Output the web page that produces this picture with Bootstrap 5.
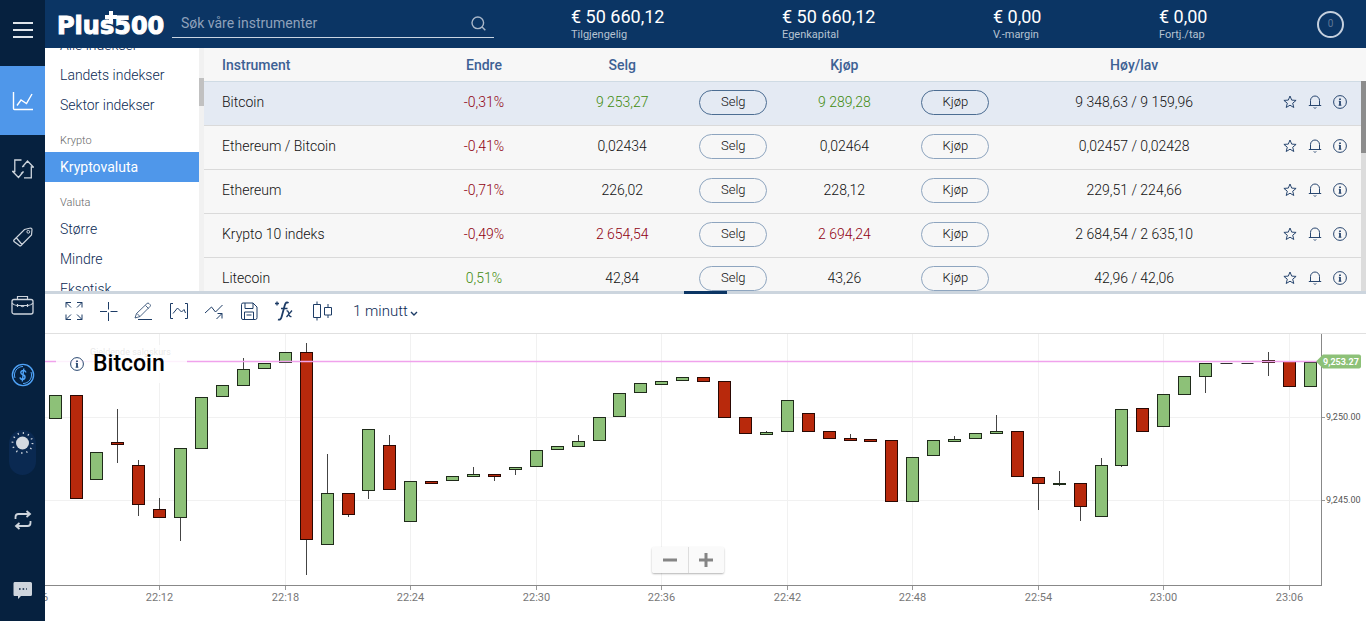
<!DOCTYPE html>
<html lang="nb">
<head>
<meta charset="utf-8">
<meta name="viewport" content="width=device-width, initial-scale=1">
<title>Plus500</title>
<link rel="stylesheet" href="https://cdn.jsdelivr.net/npm/bootstrap@5.3.0/dist/css/bootstrap.min.css">
<style>
  :root { --navy: #0b3564; --rail: #06213f; --blue: #4f97ea; --ink: #0b2a54; }
  body { font-family: Roboto, "Liberation Sans", sans-serif; font-size: 14px; line-height: 20px; color: #111; background: #fff; }
  svg { display: block; }
  .ico { fill: none; stroke: currentColor; stroke-width: 1; }
  a { color: inherit; text-decoration: none; }
  button { font-family: inherit; }

  .rail { width: 45px; background: var(--rail); color: #ced5dd; }
  .rail-item { min-height: 68px; }
  .rail-menu { height: 60px; margin-bottom: 6px; background: none; border: 0; color: #dfe5eb; }
  .rail-item.active { background: var(--blue); color: #fff; min-height: 69px; }
  .rail-item.last-item { min-height: 0; }
  .theme-switch { width: 27px; height: 45px; margin: 23px 0 11px 9px; border-radius: 14px; background: #0a2951; border: 0; color: #d3d9e0; }

  .topbar { height: 48px; background: var(--navy); color: #fff; }
  .brand { width: 127px; padding-left: 12px; color: #fff; font: 700 24px/28px "DejaVu Sans", sans-serif; -webkit-text-stroke: 1px #fff; }
  .brand-cross { position: absolute; left: 60px; top: -2px; }
  .search-box { width: 322px; height: 31px; margin-top: 7px; padding-top: 2px; border-bottom: 1px solid #c9d5e2; color: #a9b7c9; }
  .search-box input { background: none; border: 0; outline: 0; font-size: 14px; color: #fff; padding: 0 0 0 9px; }
  .search-box input::placeholder { color: #8fa1bb; opacity: 1; }
  .balances { margin-left: 77px; }
  .balances > div { flex: 211 1 0; }
  .balances > .w-margin { flex-grow: 166; }
  .balances > .w-result { flex-grow: 158; }
  .amount { font-size: 18px; line-height: 20px; margin-top: 7px; white-space: nowrap; }
  .caption-text { font-size: 11px; line-height: 15px; color: #b6c3d2; }
  .counter { width: 27px; height: 27px; border: 2px solid #c5d0de; border-radius: 50%; background: none; color: #5f7898; font-size: 10px; line-height: 20px; margin-right: 22px; }

  .upper { height: 243px; }
  .categories { width: 154px; color: var(--ink); font-weight: 300; }
  .categories a { display: block; height: 30px; line-height: 30px; padding-left: 15px; }
  .categories a:first-child { margin-top: -18px; }
  .categories a.active { background: var(--blue); color: #fff; font-weight: 400; }
  .categories h6 { font-size: 11px; line-height: 22px; height: 32px; padding: 10px 0 0 15px; margin: 0; font-weight: 300; color: #666; }
  .track { width: 5px; background: #f1f1f1; flex: none; }
  .track-list { padding-top: 30px; }
  .track-list div { height: 28px; background: #c1c1c1; }
  .track-table { margin-top: 33px; background: #dcdcdc; }
  .track-table div { height: 72px; background: #8c8c8c; }

  .quotes { table-layout: fixed; width: 100%; text-align: center; font-weight: 300; }
  .quotes th { height: 33px; padding: 2px 0 0; font-weight: 500; color: #3d6194; border-bottom: 1px solid #cfdbe4; vertical-align: middle; }
  .quotes td { height: 44px; padding: 0 0 2px; border-bottom: 1px solid #dadada; vertical-align: middle; }
  .quotes th:first-child, .quotes td:first-child { text-align: left; padding-left: 18px; }
  .quotes .selected { background: #e4eaf3; }
  .c-name { width: 18.3%; } .c-chg { width: 11.8%; } .c-price { width: 12.1%; }
  .c-btn { width: 7.1%; } .c-range { width: 23.8%; }
  .up { color: #3f8a0d; } .down { color: #900010; }
  .table-pane { background: #f7f7f7; }
  .deal { width: 68px; height: 25px; border: 1px solid #8ea5bf; border-radius: 13px; background: none; font-size: 13px; line-height: 20px; padding: 0; color: #111; font-weight: 300; }
  .selected .deal { border-color: #4c6d92; }
  .row-tools { color: #28466f; gap: 11px; padding-left: 11px; }
  .row-tools button { background: none; border: 0; padding: 0; color: inherit; }

  .splitter { height: 3px; background: #ccd5de; }
  .splitter div { width: 43px; background: var(--navy); }
  .tools { height: 40px; border-bottom: 1px solid #e0e0e0; padding: 0 19px 5px; color: #1d3c66; gap: 15px; }
  .tools button { width: 20px; height: 20px; padding: 0; border: 0; background: none; color: inherit; }
  .tools .wide-tool { width: 26px; padding-left: 3px; }
  .interval { margin-left: 3px; }
  .interval select { appearance: none; border: 0; background: none; width: 68px; padding: 0; font-size: 15px; font-weight: 300; color: var(--ink); }
  .interval svg { position: absolute; right: 3px; top: 10px; pointer-events: none; }

  .chart-title { position: absolute; left: 11px; top: 11px; width: 131px; height: 38px; padding: 0 0 0 14px; background: rgba(255,255,255,.85); gap: 9px; color: #28466f; }
  .chart-title h1 { font-size: 23px; line-height: 36px; font-weight: 500; color: #000; margin: 0; }
  .zoomer { position: absolute; left: 46%; bottom: 48px; background: rgba(250,250,250,.9); box-shadow: 0 1px 2px rgba(0,0,0,.3); border-radius: 2px; color: #858585; margin-left: -1px; }
  .zoomer button { width: 36px; height: 26px; border: 0; background: none; color: inherit; padding: 0 11px; }
  .zoomer button + button { border-left: 1px solid #ddd; padding: 0 10px; }
</style>
</head>
<body class="vh-100 overflow-hidden d-flex">

<svg width="0" height="0" class="position-absolute" aria-hidden="true">
  <symbol id="i-star" viewBox="0 0 14 14"><path d="M7 1l1.700 4.100 4.400.3-3.400 2.800 1.100 4.300L7 10.200l-3.800 2.300 1.100-4.300L.9 5.400l4.400-.3z"/></symbol>
  <symbol id="i-bell" viewBox="0 0 14 14"><path d="M.8 10.500h12.400M2.500 10.500V5.500a4.500 4.500 0 0 1 9 0v5M5.800 12.500c.6 1 1.800 1 2.400 0"/></symbol>
  <symbol id="i-info" viewBox="0 0 14 14"><circle cx="7" cy="7" r="6.400"/><path d="M7 6v4.200M7 3.500v1.500" stroke-width="1.800"/><path d="M5.800 6.300H7M5.600 10.200h2.800"/></symbol>
</svg>

<nav class="rail d-flex flex-column flex-shrink-0" aria-label="Hovedmeny">
  <button type="button" class="rail-menu flex-shrink-0 d-flex align-items-center justify-content-center" aria-label="Meny">
    <svg class="ico" width="20" height="18" viewBox="0 0 20 18"><path stroke-width="2" d="M0 2h20M0 9h20M0 16h20"/></svg>
  </button>
  <a href="#" class="rail-item active d-flex align-items-center justify-content-center" aria-label="Handle">
    <svg class="ico" width="22" height="20" viewBox="0 0 22 20"><path stroke-width="1.400" d="M1.500 1v16.500q0 1 1 1H21M5 14.500l4-5.500 5.500 3.500L20 3"/></svg>
  </a>
  <a href="#" class="rail-item d-flex align-items-center justify-content-center" aria-label="Åpne posisjoner">
    <svg class="ico" width="22" height="20" viewBox="0 0 22 20"><path stroke-width="1.300" d="M9.500 1H2.800v11.500H.7l5.800 6 5-6L9 14.500M12 18.800h7.300V8h2l-5.800-6-5.200 6 2.200-1.500"/></svg>
  </a>
  <a href="#" class="rail-item d-flex align-items-center justify-content-center" aria-label="Ordre">
    <svg class="ico" width="20" height="20" viewBox="0 0 20 20"><path stroke-width="1.200" d="M1 13L11.500 2.500l6-1.500q1.500 0 1.500 1.500l-.5 5.500L8 18.500q-.8.800-1.600 0L1 14.500q-.6-.8 0-1.500zM3.500 11l5.500 6.500"/><circle cx="15.300" cy="4.800" r="1.400"/></svg>
  </a>
  <a href="#" class="rail-item d-flex align-items-center justify-content-center" aria-label="Stengte posisjoner">
    <svg class="ico" width="23" height="20" viewBox="0 0 23 20"><rect x="1" y="4.500" width="21" height="14.500" rx="2" stroke-width="1.300"/><path stroke-width="1.200" d="M6.500 4V1.500h10V4M1 8q2 2.500 5 2.500h11q3 0 5-2.500M6.500 9v3M16.500 9v3M9.500 10.500q2 2.500 4 0"/></svg>
  </a>
  <a href="#" class="rail-item d-flex align-items-center justify-content-center pt-1" aria-label="Penger">
    <svg width="24" height="24" viewBox="0 0 24 24" fill="none" stroke="#4fa3f7"><circle cx="12" cy="12" r="10.600" stroke-width="1.400"/><path d="M4 15A8.500 8.500 0 0 1 12 3.500M20 9a8.500 8.500 0 0 1-8 11.500"/><path stroke-width="1.400" d="M14.800 9.500q-.3-2-2.500-2T9.800 9.500q0 1.700 2.200 2.300t2 2.500q-.3 2-2.500 2t-2.500-2M12.800 5.500l-1.500 13"/></svg>
  </a>
  <button type="button" role="switch" aria-checked="false" aria-label="Mørkt tema" class="theme-switch flex-shrink-0 d-flex align-items-start justify-content-center p-0">
    <svg width="25" height="25" viewBox="0 0 25 25"><circle cx="12.500" cy="13" r="6.500" fill="currentColor"/><circle cx="12.500" cy="13" r="10" fill="none" stroke="currentColor" stroke-width="1.800" stroke-dasharray="1.200 4.036"/></svg>
  </button>
  <a href="#" class="rail-item d-flex align-items-center justify-content-center" aria-label="Bytt konto">
    <svg class="ico" width="18" height="20" viewBox="0 0 18 20"><path stroke-width="1.800" d="M1.500 9V7q0-3 3-3H15M12.500 1l3.500 3-3.500 3M16.500 11v2q0 3-3 3H3M5.500 13L2 16l3.500 3"/></svg>
  </a>
  <a href="#" class="rail-item last-item flex-grow-1 d-flex justify-content-center pt-4" aria-label="Chat">
    <svg class="mt-1" width="20" height="17" viewBox="0 0 20 17"><path fill="currentColor" d="M1.500 0h16q1.500 0 1.500 1.500v11q0 1.500-1.500 1.500H8l-3 3v-3H1.500Q.5 14 .5 12.500v-11Q.5 0 1.500 0z"/><path stroke="#06213f" stroke-width="1.500" stroke-dasharray="1.600 2" d="M6 7h8"/></svg>
  </a>
</nav>

<div class="d-flex flex-column flex-grow-1 overflow-hidden">
  <header class="topbar d-flex flex-shrink-0">
    <a href="#" class="brand position-relative flex-shrink-0 pt-2 mt-1">Plus500
      <svg class="brand-cross" width="12" height="22" viewBox="0 0 12 22"><path fill="#fff" d="M4 9h4v4h4v4H8v4H4v-4H0v-4h4z"/></svg>
    </a>
    <form class="search-box d-flex align-items-center flex-shrink-0" role="search">
      <input type="search" class="flex-grow-1" placeholder="Søk våre instrumenter" aria-label="Søk våre instrumenter">
      <svg class="ico me-2" width="15" height="15" viewBox="0 0 15 15"><circle cx="6.800" cy="6.800" r="5.800" stroke-width="1.400"/><path stroke-width="1.400" d="M10.800 10.800l3.500 3.500"/></svg>
    </form>
    <div class="balances d-flex flex-grow-1">
      <div><div class="amount">€ 50 660,12</div><div class="caption-text">Tilgjengelig</div></div>
      <div><div class="amount">€ 50 660,12</div><div class="caption-text">Egenkapital</div></div>
      <div class="w-margin"><div class="amount">€ 0,00</div><div class="caption-text">V.-margin</div></div>
      <div class="w-result"><div class="amount">€ 0,00</div><div class="caption-text">Fortj./tap</div></div>
    </div>
    <button type="button" class="counter p-0 flex-shrink-0 align-self-center" aria-label="Varsler">0</button>
  </header>

  <div class="upper d-flex flex-shrink-0 overflow-hidden">
    <nav class="categories flex-shrink-0 overflow-hidden" aria-label="Kategorier">
      <a href="#">Alle indekser</a>
      <a href="#">Landets indekser</a>
      <a href="#">Sektor indekser</a>
      <h6>Krypto</h6>
      <a href="#" class="active">Kryptovaluta</a>
      <h6>Valuta</h6>
      <a href="#">Større</a>
      <a href="#">Mindre</a>
      <a href="#">Eksotisk</a>
    </nav>
    <div class="track track-list"><div></div></div>
    <div class="table-pane d-flex flex-grow-1 overflow-hidden">
      <div class="flex-grow-1 overflow-hidden">
        <table class="quotes">
          <thead>
            <tr><th class="c-name">Instrument</th><th class="c-chg">Endre</th><th class="c-price">Selg</th><th class="c-btn"></th><th class="c-price">Kjøp</th><th class="c-btn"></th><th class="c-range">Høy/lav</th><th></th></tr>
          </thead>
          <tbody id="quotes"></tbody>
        </table>
      </div>
      <div class="track track-table"><div></div></div>
    </div>
  </div>

  <div class="splitter d-flex justify-content-center flex-shrink-0"><div></div></div>

  <div class="tools d-flex align-items-center flex-shrink-0" role="toolbar" aria-label="Diagramverktøy">
    <button type="button" aria-label="Fullskjerm"><svg class="ico" width="20" height="20" viewBox="0 0 20 20"><path d="M2 6.500v-5h5M2 1.500l5 5M13 1.500h5v5M18 1.500l-5 5M2 13.500v5h5M2 18.500l5-5M18 13.500v5h-5M18 18.500l-5-5"/></svg></button>
    <button type="button" aria-label="Trådkors"><svg class="ico" width="20" height="20" viewBox="0 0 20 20"><path d="M9.500 1v7.500M9.500 11.500V20M1 10.500h7M11.500 10.500h7"/></svg></button>
    <button type="button" aria-label="Tegn"><svg class="ico" width="20" height="20" viewBox="0 0 20 20"><path stroke-width=".8" d="M1 17l1.500-4.500L13 2.500q1-1 2 0l1 1q1 1 0 2L6 15.500zM3 12.500l3 3M11.500 4.500l3 3"/><path d="M4 18.500h14"/></svg></button>
    <button type="button" aria-label="Område"><svg class="ico" width="20" height="20" viewBox="0 0 20 20"><path d="M4 2.500H1.500v15H4M16 2.500h2.500v15H16M4 12.500l4.500-5.500 4 4 2.500-2.500 1.500 3.500"/></svg></button>
    <button type="button" aria-label="Trend"><svg class="ico" width="20" height="20" viewBox="0 0 20 20"><path d="M1 12l6.500-6 4 5L18.500 4M12.500 18l5.500-5.500M13.500 12.500H18v5"/></svg></button>
    <button type="button" aria-label="Lagre"><svg class="ico" width="20" height="20" viewBox="0 0 20 20"><path d="M4 2h10l4 4v10.500q0 2-1.500 2h-12.500q-1.500 0-1.500-1.500V3.500q0-1.500 1.500-1.500zM6 2v5.500h8V2M5.500 18.500v-7.500h9v7.500M7.500 14h5"/></svg></button>
    <button type="button" aria-label="Indikatorer"><svg class="ico" width="20" height="20" viewBox="0 0 20 20"><path stroke-width="1.300" d="M1 2.500h4M3 .5v4"/><path stroke-width="1.800" d="M14.500 2q-2.500-2-3.800 2.500l-3 11q-1 4-3.700 3"/><path stroke-width="1.300" d="M7 7.500h6.500M12.500 10q1.500-.5 2 1.500l1 3q.5 1.500 2 1M18 9.500l-5.500 6.500"/></svg></button>
    <button type="button" class="wide-tool" aria-label="Diagramtype"><svg class="ico" width="21" height="20" viewBox="0 0 21 20"><path d="M1.500 3.500h7v13h-7zM5 .5v3M5 16.500v3M12.500 6.500h7v7.500h-7zM16 3v3.500M16 14v3"/></svg></button>
    <div class="interval position-relative">
      <select aria-label="Intervall"><option>1 minutt</option><option>5 minutter</option></select>
      <svg class="ico" width="8" height="6" viewBox="0 0 8 6"><path stroke-width="1.400" d="M1 1l3 3 3-3"/></svg>
    </div>
  </div>

  <main class="position-relative flex-grow-1 overflow-hidden">
    <svg id="chart" class="w-100 h-100" role="img" aria-label="Bitcoin, 1 minutt"></svg>
    <div class="chart-title d-flex align-items-center">
      <svg class="ico" width="14" height="14"><use href="#i-info"/></svg>
      <h1>Bitcoin</h1>
    </div>
    <div class="zoomer d-flex">
      <button type="button" aria-label="Zoom ut"><svg width="14" height="14" viewBox="0 0 14 14"><path stroke="currentColor" stroke-width="3" d="M0 7h14"/></svg></button>
      <button type="button" aria-label="Zoom inn"><svg width="14" height="14" viewBox="0 0 14 14"><path stroke="currentColor" stroke-width="3" d="M0 7h14M7 0v14"/></svg></button>
    </div>
  </main>
</div>

<script>
// Quote rows: name, change, sell, buy, high/low, price direction, change direction
const quotes = [
  ['Bitcoin', '-0,31%', '9 253,27', '9 289,28', '9 348,63 / 9 159,96', 'up', 'down'],
  ['Ethereum / Bitcoin', '-0,41%', '0,02434', '0,02464', '0,02457 / 0,02428', '', 'down'],
  ['Ethereum', '-0,71%', '226,02', '228,12', '229,51 / 224,66', '', 'down'],
  ['Krypto 10 indeks', '-0,49%', '2 654,54', '2 694,24', '2 684,54 / 2 635,10', 'down', 'down'],
  ['Litecoin', '0,51%', '42,84', '43,26', '42,96 / 42,06', '', 'up']
];
const tool = (id, label) => `<button type="button" aria-label="${label}"><svg class="ico" width="14" height="14"><use href="#i-${id}"/></svg></button>`;
document.getElementById('quotes').innerHTML = quotes.map((q, i) => `
  <tr class="${i ? '' : 'selected'}"><td>${q[0]}</td><td class="${q[6]}">${q[1]}</td><td class="${q[5]}">${q[2]}</td>
  <td><button type="button" class="deal">Selg</button></td><td class="${q[5]}">${q[3]}</td>
  <td><button type="button" class="deal">Kjøp</button></td><td>${q[4]}</td>
  <td><div class="row-tools d-flex">${tool('star', 'Favoritt')}${tool('bell', 'Varsel')}${tool('info', 'Detaljer')}</div></td></tr>`).join('');

// One candle a minute from 22:07: colour, body top, body bottom, wick top, wick bottom (depth below the plot's top edge)
const candles = [
  ['g',61,84,61,85],['r',61,164],['g',118,145],['r',108,110,75,129],['r',131,170,126,182],['r',175,183,164,183],
  ['g',114,183,114,207],['g',63,114],['g',51,62],['g',35,51,24,51],['g',29,34],['g',18,28],['r',18,205,9,241],
  ['g',159,210,120,210],['r',159,180,159,183],['g',95,156,95,165],['r',111,155,101,155],['g',147,187],['r',147,149],
  ['g',142,146],['g',140,142,133,142],['r',140,142,140,147],['g',133,135,133,141],['g',116,132],['g',112,115],
  ['g',107,112,101,112],['g',83,106],['g',59,82],['g',49,58],['g',47,50],['g',43,46],['r',43,47,43,48],['r',47,83],
  ['r',83,99],['g',98,100,97,100],['g',66,97],['r',79,97],['r',97,104],['r',104,106,100,106],['r',105,107],
  ['r',106,167],['g',123,167],['g',106,121,106,122],['g',105,107,102,107],['g',99,104],['g',97,99,81,99],['r',97,142],
  ['r',143,149,143,176],['g',149,150,137,152],['r',149,172,149,187],['g',131,182,124,182],['g',75,131,75,133],
  ['r',74,97],['g',60,92],['g',42,60],['g',29,42,29,59],['g',29,29],['g',29,29],['r',26,28,18,42],['r',27,52],['g',28,52]
];
function drawChart() {
  const svg = document.getElementById('chart');
  const W = svg.clientWidth, H = svg.clientHeight;
  const right = W - 45, base = H - 36;
  const step = (right - 10.5) / 60.5;
  const x = i => Math.floor(right - 10.8 - (60 - i) * step) + .5;
  const line = (x1, y1, x2, y2, c, w = 1) => `<line x1="${x1}" y1="${y1}" x2="${x2}" y2="${y2}" stroke="${c}" stroke-width="${w}"/>`;
  const text = (tx, ty, t, size, fill, more = '') => `<text x="${tx}" y="${ty}" font-size="${size}" fill="${fill}" ${more}>${t}</text>`;
  let out = '';
  for (let i = -1; i <= 59; i += 6) {
    const m = 7 + i, label = (22 + Math.floor(m / 60)) + ':' + String(m % 60).padStart(2, '0');
    out += line(x(i), 0, x(i), base, '#f1f1f1', 1) + line(x(i), base, x(i), base + 5, '#999')
         + text(x(i), base + 16, label, 11, '#777', 'text-anchor="middle"');
  }
  [[83.5, '9,250.00'], [166.5, '9,245.00']].forEach(([y, t]) => {
    out += line(0, y, right, y, '#f1f1f1') + line(right, y, right + 4, y, '#999') + text(right + 5, y + 2, t, 9, '#555');
  });
  out += text(45, 21, 'Gjeldende salgskurs', 9, '#666');
  candles.forEach(([c, t, b, hi = t, lo = b], i) => {
    const cx = x(i);
    out += line(cx, hi, cx, lo, '#444');
    out += t === b ? line(cx - 6, t + .5, cx + 6, t + .5, '#333')
      : `<rect x="${cx - 6}" y="${t + .5}" width="12" height="${b - t}" fill="${c === 'g' ? '#8dc178' : '#b8290c'}" stroke="${c === 'g' ? '#1f2b1a' : '#2a0803'}"/>`;
  });
  out += line(right + .5, 0, right + .5, base, '#888') + line(0, base + .5, right + 1, base + .5, '#888');
  out += line(0, 27.5, right, 27.5, '#f0a2ec', 1.5);
  out += `<path d="M${right - 5} 27.500l7-7h36q2 0 2 2v10q0 2-2 2h-36z" fill="#8dc178"/>` + text(right + 2, 31, '9,253.27', 9, '#fff', 'font-weight="700"');
  svg.innerHTML = out;
}
drawChart();
window.addEventListener('resize', drawChart);
</script>
<script src="https://cdn.jsdelivr.net/npm/bootstrap@5.3.0/dist/js/bootstrap.bundle.min.js"></script>
</body>
</html>
